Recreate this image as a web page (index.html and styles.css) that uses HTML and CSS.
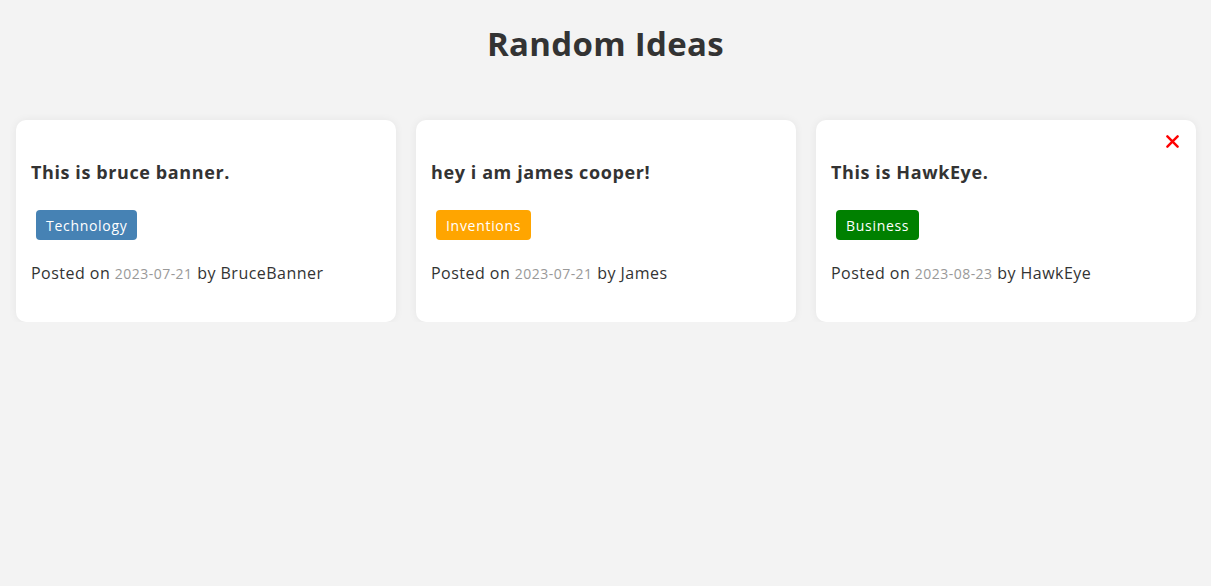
FILE: index.html
```html
<!DOCTYPE html>
<html lang="en">
<head>
<meta charset="UTF-8">
<title>Random Ideas</title>
<link rel="stylesheet" href="styles.css">
</head>
<body>
<header class="header">
  <h1 class="title">Random Ideas</h1>
</header>
<main class="cards">
  <article class="card">
    <h3 class="card-title">This is bruce banner.</h3>
    <p class="tag tag-technology">Technology</p>
    <p class="meta">Posted on <span class="date">2023-07-21</span> by <span class="author">BruceBanner</span></p>
  </article>
  <article class="card">
    <h3 class="card-title">hey i am james cooper!</h3>
    <p class="tag tag-inventions">Inventions</p>
    <p class="meta">Posted on <span class="date">2023-07-21</span> by <span class="author">James</span></p>
  </article>
  <article class="card">
    <button class="delete" aria-label="Delete">
      <svg viewBox="0 0 14 14" width="13" height="13"><path d="M1.5 1.5 L12.5 12.5 M12.5 1.5 L1.5 12.5" stroke="#ff0000" stroke-width="2.6" stroke-linecap="round" fill="none"/></svg>
    </button>
    <h3 class="card-title">This is HawkEye.</h3>
    <p class="tag tag-business">Business</p>
    <p class="meta">Posted on <span class="date">2023-08-23</span> by <span class="author">HawkEye</span></p>
  </article>
</main>
</body>
</html>
```
FILE: styles.css
```css
* { box-sizing: border-box; }
body {
  margin: 0;
  background: #f3f3f3;
  color: #333;
  font-family: "Open Sans", "Liberation Sans", sans-serif;
}
.header {
  display: flex;
  justify-content: center;
  padding-top: 22px;
}
.title {
  margin: 0;
  font-size: 33px;
  line-height: 44px;
  font-weight: 700;
  letter-spacing: 0.3px;
  color: #333;
}
.cards {
  width: 1180px;
  margin: 54px auto 0 16px;
  display: grid;
  grid-template-columns: repeat(3, 1fr);
  gap: 20px;
}
.card {
  position: relative;
  background: #fff;
  border-radius: 10px;
  box-shadow: 0 0 8px rgba(0,0,0,0.06);
  padding: 15px 15px 36px;
  display: flex;
  flex-direction: column;
  align-items: flex-start;
}
.card-title {
  margin: 24px 0 0;
  font-size: 18px;
  line-height: 27px;
  font-weight: 700;
  letter-spacing: 0.6px;
  color: #333;
}
.tag {
  margin: 24px 0 0 5px;
  height: 30px;
  padding: 0 10px;
  display: flex;
  align-items: center;
  border-radius: 4px;
  color: #fff;
  font-size: 14px;
  letter-spacing: 0.7px;
}
.tag-technology { background: #4682b4; }
.tag-inventions { background: #ffa500; }
.tag-business { background: #008000; }
.meta {
  margin: 21px 0 0;
  font-size: 16px;
  line-height: 24px;
  letter-spacing: 0.47px;
  color: #333;
}
.date {
  color: #999;
  font-size: 14px;
}
.delete {
  position: absolute;
  top: 14px;
  right: 16px;
  width: 15px;
  height: 15px;
  padding: 0;
  border: none;
  background: transparent;
  display: flex;
  align-items: center;
  justify-content: center;
  cursor: pointer;
}
```
